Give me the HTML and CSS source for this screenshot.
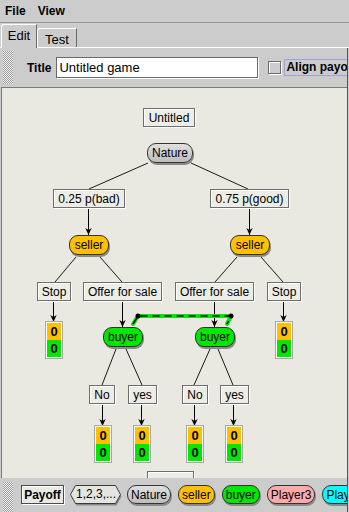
FILE: index.html
```html
<!DOCTYPE html>
<html>
<head>
<meta charset="utf-8">
<link rel="stylesheet" href="styles.css">
</head>
<body>
<div class="menubar"><span class="menu">File</span><span class="menu">View</span></div>
<div class="tabs">
  <div class="tab tab-active">Edit</div>
  <div class="tab tab-test">Test</div>
</div>
<div class="panel">
  <div class="toolbar">
    <div class="grip"></div>
    <span class="title-label">Title</span>
    <div class="field">Untitled game</div>
    <div class="check"></div>
    <div class="align">Align payoff</div>
  </div>
  <div class="canvas">
    <svg class="edges" width="345" height="390" viewBox="0 0 345 390">
      <defs>
        <marker id="ah" viewBox="0 0 10 10" refX="10" refY="5" markerWidth="7" markerHeight="7" orient="auto" markerUnits="userSpaceOnUse">
          <path d="M0,0.5 L10,5 L0,9.5 L3,5 Z" fill="#000"/>
        </marker>
      </defs>
      <g stroke="#1a1a1a" stroke-width="1" fill="none">
        <line x1="146" y1="75" x2="87" y2="101"/>
        <line x1="189" y1="75" x2="246" y2="101"/>
        <line x1="74" y1="169" x2="53" y2="194"/>
        <line x1="98" y1="169" x2="120" y2="194"/>
        <line x1="235" y1="169" x2="213" y2="194"/>
        <line x1="259" y1="169" x2="281" y2="194"/>
        <line x1="114" y1="261" x2="100" y2="297"/>
        <line x1="124" y1="261" x2="140" y2="297"/>
        <line x1="208" y1="261" x2="192" y2="297"/>
        <line x1="216" y1="261" x2="231" y2="297"/>
      </g>
      <g stroke="#000" stroke-width="1" marker-end="url(#ah)">
        <line x1="86.5" y1="120" x2="86.5" y2="147"/>
        <line x1="247.5" y1="120" x2="247.5" y2="147"/>
        <line x1="51.5" y1="212" x2="51.5" y2="234"/>
        <line x1="120.5" y1="212" x2="120.5" y2="239"/>
        <line x1="212.5" y1="212" x2="212.5" y2="239"/>
        <line x1="281.5" y1="212" x2="281.5" y2="234"/>
        <line x1="100.5" y1="315" x2="100.5" y2="338"/>
        <line x1="139.5" y1="315" x2="139.5" y2="338"/>
        <line x1="192.5" y1="315" x2="192.5" y2="338"/>
        <line x1="231.5" y1="315" x2="231.5" y2="338"/>
      </g>
      <g fill="none" stroke-linecap="round" stroke-linejoin="round">
        <polyline points="131,236 136,228 229,228 225,236" stroke="#00e800" stroke-width="4"/>
        <polyline points="131,236 136,228 229,228 225,236" stroke="#000" stroke-width="1.5" stroke-dasharray="7 5" stroke-linecap="butt"/>
      </g>
      <circle cx="136" cy="228" r="2.5" fill="#000"/>
      <circle cx="229" cy="228" r="2.5" fill="#000"/>
    </svg>

    <div class="box n-untitled">Untitled</div>
    <div class="pill nature n-nature">Nature</div>
    <div class="box n-bad">0.25 p(bad)</div>
    <div class="box n-good">0.75 p(good)</div>
    <div class="pill seller n-seller-l">seller</div>
    <div class="pill seller n-seller-r">seller</div>
    <div class="box n-stop-l">Stop</div>
    <div class="box n-offer-l">Offer for sale</div>
    <div class="box n-offer-r">Offer for sale</div>
    <div class="box n-stop-r">Stop</div>
    <div class="pay n-pay-sl"><div class="cell c1">0</div><div class="cell c2">0</div></div>
    <div class="pay n-pay-sr"><div class="cell c1">0</div><div class="cell c2">0</div></div>
    <div class="pill buyer n-buyer-l">buyer</div>
    <div class="pill buyer n-buyer-r">buyer</div>
    <div class="box n-no-l">No</div>
    <div class="box n-yes-l">yes</div>
    <div class="box n-no-r">No</div>
    <div class="box n-yes-r">yes</div>
    <div class="pay n-pay-1"><div class="cell c1">0</div><div class="cell c2">0</div></div>
    <div class="pay n-pay-2"><div class="cell c1">0</div><div class="cell c2">0</div></div>
    <div class="pay n-pay-3"><div class="cell c1">0</div><div class="cell c2">0</div></div>
    <div class="pay n-pay-4"><div class="cell c1">0</div><div class="cell c2">0</div></div>
    <div class="box n-partial"></div>
  </div>
  <div class="palette">
    <div class="grip grip-pal"></div>
    <div class="pal-payoff">Payoff</div>
    <div class="pal-hex">
      <svg class="hex-bg" width="52" height="21" viewBox="0 0 52 21">
        <polygon points="5.5,1.5 45.5,1.5 50.5,10.5 45.5,19.5 5.5,19.5 0.5,10.5" fill="#8a8a8a" transform="translate(1,1)"/>
        <polygon points="5.5,0.5 45.5,0.5 50.5,9.5 45.5,18.5 5.5,18.5 0.5,9.5" fill="#e4e4e0" stroke="#3a3a3a"/>
      </svg>
      <span class="hex-text">1,2,3,...</span>
    </div>
    <div class="ppill nature">Nature</div>
    <div class="ppill seller">seller</div>
    <div class="ppill buyer">buyer</div>
    <div class="ppill p3">Player3</div>
    <div class="ppill p4">Player4</div>
  </div>
</div>
</body>
</html>
```

FILE: styles.css
```css
html, body {
  margin: 0;
  padding: 0;
}
body {
  width: 349px;
  height: 512px;
  overflow: hidden;
  background: #cccccc;
  font-family: "Liberation Sans", Arial, sans-serif;
  font-size: 12px;
  color: #000;
}

/* menu */
.menubar {
  height: 22px;
  border-bottom: 1px solid #999999;
  display: flex;
  align-items: center;
  padding-left: 5px;
  gap: 12px;
}
.menu {
  font-weight: bold;
  font-size: 12px;
}

/* tabs */
.tabs {
  height: 24px;
  border-bottom: 1px solid #ffffff;
  display: flex;
  align-items: flex-end;
  padding-left: 1px;
}
.tab {
  box-sizing: border-box;
  font-size: 13px;
  border-top: 1px solid #ffffff;
  border-left: 1px solid #ffffff;
  border-right: 1px solid #6a6a6a;
  border-top-left-radius: 3px;
  display: flex;
  justify-content: center;
  background: #cccccc;
}
.tab-active {
  width: 36px;
  height: 24px;
  margin-bottom: -1px;
  padding-top: 3px;
  position: relative;
}
.tab-test {
  width: 40px;
  height: 19px;
  padding-top: 3px;
}

/* panel */
.panel {
  width: 347px;
  border-right: 1px solid #555555;
}
.toolbar {
  height: 39px;
  display: flex;
  align-items: center;
  padding-left: 3px;
  overflow: hidden;
  white-space: nowrap;
}
.grip {
  width: 10px;
  height: 33px;
  flex: none;
  background: repeating-conic-gradient(#f2f2f2 0 25%, #9a9a9a 0 50%) 0 0 / 2px 2px;
}
.title-label {
  font-weight: bold;
  font-size: 12px;
  margin-left: 14px;
  margin-right: 5px;
}
.field {
  box-sizing: border-box;
  width: 202px;
  height: 21px;
  flex: none;
  background: #ffffff;
  border: 1px solid #6a6a6a;
  box-shadow: 1px 1px 0 #ffffff;
  padding-left: 2px;
  font-size: 13px;
  line-height: 19px;
}
.check {
  box-sizing: border-box;
  width: 13px;
  height: 13px;
  flex: none;
  margin-left: 10px;
  border: 1px solid #6a6a6a;
  box-shadow: inset 1px 1px 0 #ffffff, 1px 1px 0 #ffffff;
  background: #cccccc;
}
.align {
  flex: none;
  box-sizing: border-box;
  height: 17px;
  margin-left: 3px;
  padding: 0 2px 0 1px;
  border: 1px solid #a0a0d8;
  font-weight: bold;
  font-size: 12px;
  line-height: 15px;
}

/* canvas */
.canvas {
  position: relative;
  height: 390px;
  margin-left: 1px;
  border-top: 1px solid #7a7a7a;
  border-left: 1px solid #7a7a7a;
  background: #e9e9e2;
  overflow: hidden;
}
.edges {
  position: absolute;
  left: 0;
  top: 0;
}
.box {
  position: absolute;
  box-sizing: border-box;
  height: 19px;
  border: 1px solid #6e6e6e;
  box-shadow: 1px 1px 0 #ffffff, inset 1px 1px 0 #ffffff;
  background: #ededE7;
  display: flex;
  align-items: center;
  justify-content: center;
  font-size: 12px;
  white-space: nowrap;
}
.pill {
  position: absolute;
  box-sizing: border-box;
  height: 20px;
  border: 1px solid #333333;
  border-radius: 9px;
  box-shadow: 1px 2px 0 #8a8a8a;
  display: flex;
  align-items: center;
  justify-content: center;
  font-size: 12px;
  white-space: nowrap;
}
.nature {
  background: linear-gradient(#e0e0e0, #bdbdbd);
}
.seller {
  background: #ffc000;
}
.buyer {
  background: #00e800;
}
.pay {
  position: absolute;
  box-sizing: border-box;
  width: 16px;
  height: 36px;
  border: 1px solid #ffffff;
  box-shadow: 0 0 0 1px #a8a8a8;
}
.cell {
  height: 17px;
  font-weight: bold;
  font-size: 13px;
  line-height: 17px;
  text-align: center;
}
.c1 {
  background: #ffc000;
}
.c2 {
  background: #00e800;
}

/* node positions on the canvas */
.n-untitled { left: 141px; top: 20px; width: 52px; }
.n-nature { left: 145px; top: 55px; width: 46px; }
.n-bad { left: 51px; top: 101px; width: 72px; }
.n-good { left: 208px; top: 101px; width: 79px; }
.n-seller-l { left: 67px; top: 147px; width: 40px; }
.n-seller-r { left: 228px; top: 147px; width: 40px; }
.n-stop-l { left: 35px; top: 194px; width: 34px; }
.n-offer-l { left: 81px; top: 194px; width: 79px; }
.n-offer-r { left: 173px; top: 194px; width: 79px; }
.n-stop-r { left: 265px; top: 194px; width: 34px; }
.n-pay-sl { left: 44px; top: 234px; }
.n-pay-sr { left: 274px; top: 234px; }
.n-buyer-l { left: 101px; top: 239px; width: 40px; }
.n-buyer-r { left: 193px; top: 239px; width: 40px; }
.n-no-l { left: 87px; top: 297px; width: 26px; }
.n-yes-l { left: 126px; top: 297px; width: 29px; }
.n-no-r { left: 180px; top: 297px; width: 26px; }
.n-yes-r { left: 218px; top: 297px; width: 29px; }
.n-pay-1 { left: 93px; top: 338px; }
.n-pay-2 { left: 132px; top: 338px; }
.n-pay-3 { left: 185px; top: 338px; }
.n-pay-4 { left: 224px; top: 338px; }
.n-partial { left: 145px; top: 383px; width: 47px; height: 20px; }

/* palette */
.palette {
  height: 34px;
  display: flex;
  align-items: flex-start;
  padding-left: 3px;
  overflow: hidden;
  white-space: nowrap;
}
.grip-pal {
  margin-top: 4px;
  height: 30px;
}
.pal-payoff {
  box-sizing: border-box;
  margin-top: 7px;
  margin-left: 8px;
  height: 19px;
  width: 43px;
  border: 1px solid #4a4a4a;
  box-shadow: inset 1px 1px 0 #ffffff, 1px 1px 0 #ffffff;
  background: #e9e9e2;
  font-weight: bold;
  font-size: 12px;
  display: flex;
  align-items: center;
  justify-content: center;
  flex: none;
}
.pal-hex {
  position: relative;
  margin-top: 7px;
  margin-left: 6px;
  width: 52px;
  height: 21px;
  flex: none;
}
.hex-bg {
  position: absolute;
  left: 0;
  top: 0;
}
.hex-text {
  position: relative;
  display: block;
  height: 19px;
  line-height: 19px;
  text-align: center;
  font-size: 12px;
}
.ppill {
  box-sizing: border-box;
  flex: none;
  margin-top: 7px;
  margin-left: 5px;
  height: 19px;
  padding: 0 3px;
  border: 1px solid #333333;
  border-radius: 9px;
  box-shadow: 1px 2px 0 #8a8a8a;
  display: flex;
  align-items: center;
  font-size: 12px;
}
.ppill + .ppill {
  margin-left: 7px;
}
.p3 {
  background: #ffaaaa;
}
.p4 {
  background: #00ffff;
}
```
